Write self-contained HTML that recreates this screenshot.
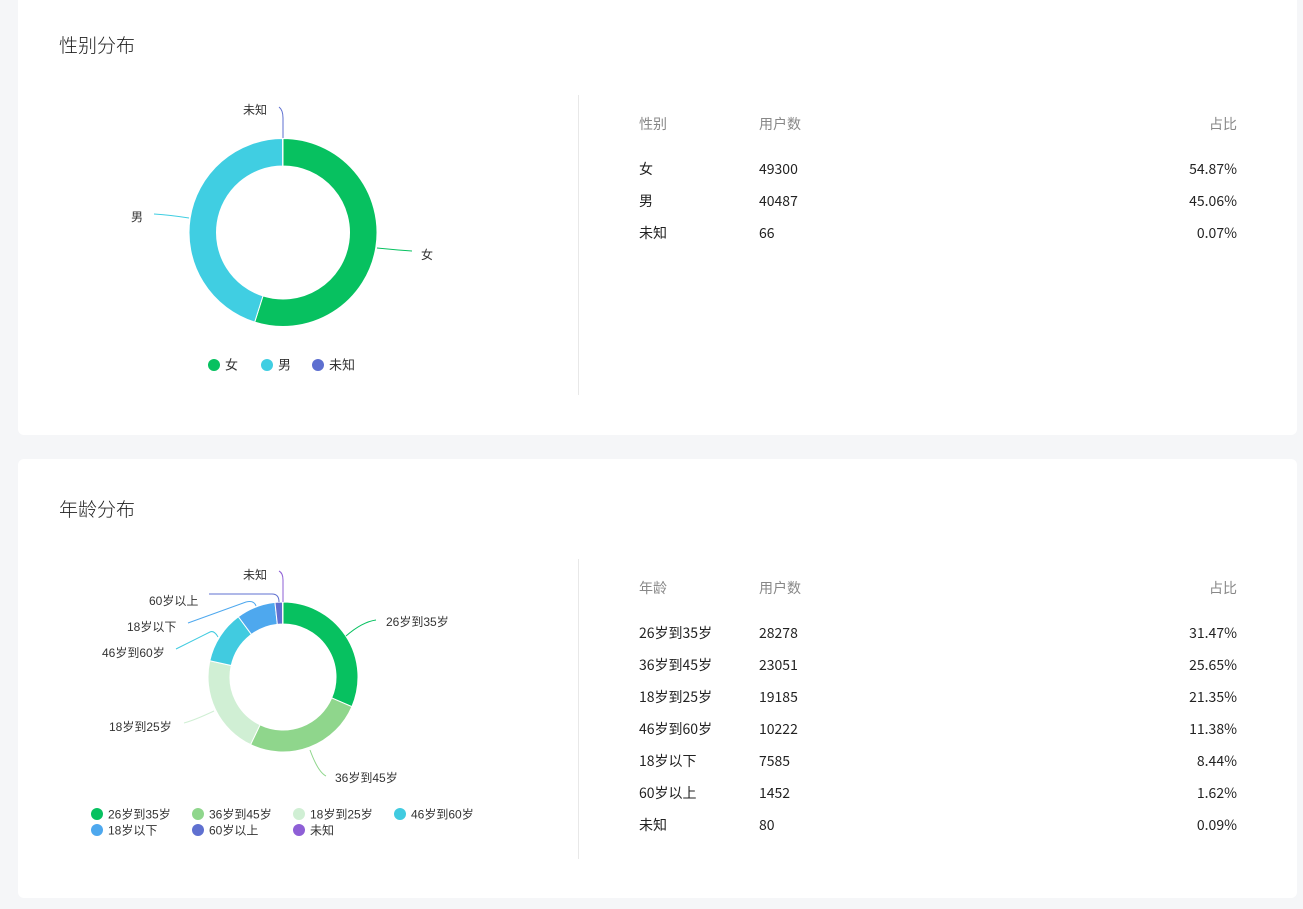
<!DOCTYPE html>
<html><head><meta charset="utf-8">
<style>
*{margin:0;padding:0;box-sizing:border-box}
body{width:1303px;height:909px;background:#f5f6f8;font-family:"Liberation Sans","Noto Sans CJK SC",sans-serif;position:relative;overflow:hidden}
.card{position:absolute;left:18px;width:1279px;background:#fff;border-radius:6px}
.t{position:absolute;font-size:19px;color:#222;font-family:"Noto Sans CJK SC",sans-serif;font-weight:300;line-height:24px}
.div{position:absolute;left:560px;width:1px;background:#e8e8e8}
.tx{position:absolute;font-size:14px;color:#222;white-space:nowrap;font-family:"Noto Sans CJK SC",sans-serif;line-height:20px}
.h{color:#888}
.r{text-align:right;width:100px}
svg{position:absolute;left:0;top:0}
</style></head><body>
<div class="card" style="top:-10px;height:445px"></div>
<div class="card" style="top:459px;height:439px"></div>
<div class="t" style="left:59px;top:33px">性别分布</div>
<div class="t" style="left:59px;top:497px">年龄分布</div>
<div class="div" style="left:578px;top:95px;height:300px"></div>
<div class="div" style="left:578px;top:559px;height:300px"></div>
<div id="tables"></div>
<svg id="s" width="1303" height="909" font-family="Liberation Sans, Noto Sans CJK SC, sans-serif" font-size="12" fill="#333"></svg>
<script>
var s=document.getElementById('s'),H='';
function arcs(cx,cy,R,r,data){var a=-Math.PI/2;data.forEach(function(d){var b=a+d[0]/100*2*Math.PI;var L=(b-a)>Math.PI?1:0;
function p(rr,t){return (cx+rr*Math.cos(t)).toFixed(2)+' '+(cy+rr*Math.sin(t)).toFixed(2)}
H+='<path d="M'+p(R,a)+' A'+R+' '+R+' 0 '+L+' 1 '+p(R,b)+' L'+p(r,b)+' A'+r+' '+r+' 0 '+L+' 0 '+p(r,a)+'Z" fill="'+d[1]+'" stroke="#fff" stroke-width="1"/>';a=b;});}
arcs(283,232.5,94,66.5,[[54.87,'#07c160'],[45.06,'#40cee2'],[0.07,'#5d6fd0']]);
arcs(283,677,75,53,[[31.47,'#07c160'],[25.65,'#8fd68c'],[21.35,'#d0efd4'],[11.38,'#41cbe0'],[8.44,'#4ea8ee'],[1.62,'#5f70d0'],[0.09,'#8e5fd6']]);
H+='<path d="M377 248 Q395 250 412 251" stroke="#07c160" fill="none"/>';
H+='<path d="M189 218 Q170 215 154 214" stroke="#40cee2" fill="none"/>';
H+='<path d="M283 138 L283 118 Q283 110 279 107" stroke="#5d6fd0" fill="none"/>';
H+='<text x="243" y="114">未知</text><text x="131" y="221">男</text><text x="421" y="259">女</text>';
H+='<path d="M346 636 Q362 622 376 620" stroke="#07c160" fill="none"/>';
H+='<path d="M310 750 Q318 772 326 776" stroke="#8fd68c" fill="none"/>';
H+='<path d="M214 711 Q195 720 184 723" stroke="#d0efd4" fill="none"/>';
H+='<path d="M218 637 Q214 630 210 632 L176 649" stroke="#41cbe0" fill="none"/>';
H+='<path d="M256 606 Q254 600 246 602 L188 623" stroke="#4ea8ee" fill="none"/>';
H+='<path d="M279 602 Q279 594 272 594 L209 594" stroke="#5f70d0" fill="none"/>';
H+='<path d="M283 602 L283 580 Q283 573 279 571" stroke="#8e5fd6" fill="none"/>';
H+='<text x="243" y="579">未知</text><text x="149" y="605">60岁以上</text><text x="127" y="631">18岁以下</text><text x="102" y="657">46岁到60岁</text><text x="109" y="731">18岁到25岁</text><text x="386" y="626">26岁到35岁</text><text x="335" y="782">36岁到45岁</text>';
function lg(x,y,c,t,fs){H+='<circle cx="'+x+'" cy="'+y+'" r="6" fill="'+c+'"/><text x="'+(x+11)+'" y="'+(y+4.5)+'" font-size="'+fs+'">'+t+'</text>';}
lg(214,365,'#07c160','女',13);lg(267,365,'#40cee2','男',13);lg(318,365,'#5d6fd0','未知',13);
lg(97,814,'#07c160','26岁到35岁',12);lg(198,814,'#8fd68c','36岁到45岁',12);lg(299,814,'#d0efd4','18岁到25岁',12);lg(400,814,'#41cbe0','46岁到60岁',12);
lg(97,830,'#4ea8ee','18岁以下',12);lg(198,830,'#5f70d0','60岁以上',12);lg(299,830,'#8e5fd6','未知',12);
s.innerHTML=H;
var T='';
function tbl(y0,head,rows,hy){T+='<div class="tx h" style="left:639px;top:'+hy+'px">'+head+'</div><div class="tx h" style="left:759px;top:'+hy+'px">用户数</div><div class="tx h r" style="left:1137px;top:'+hy+'px">占比</div>';
rows.forEach(function(r,i){var y=y0+i*32;T+='<div class="tx" style="left:639px;top:'+y+'px">'+r[0]+'</div><div class="tx" style="left:759px;top:'+y+'px">'+r[1]+'</div><div class="tx r" style="left:1137px;top:'+y+'px">'+r[2]+'</div>';});}
tbl(159,'性别',[['女','49300','54.87%'],['男','40487','45.06%'],['未知','66','0.07%']],114);
tbl(623,'年龄',[['26岁到35岁','28278','31.47%'],['36岁到45岁','23051','25.65%'],['18岁到25岁','19185','21.35%'],['46岁到60岁','10222','11.38%'],['18岁以下','7585','8.44%'],['60岁以上','1452','1.62%'],['未知','80','0.09%']],578);
document.getElementById('tables').innerHTML=T;
</script>
</body></html>
